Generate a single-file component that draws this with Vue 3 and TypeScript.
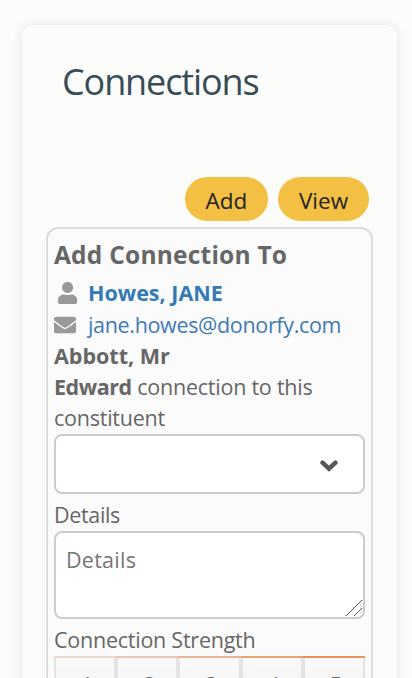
<script setup lang="ts">
import { ref } from 'vue'

interface Strength {
  value: number
  color: string
}

const details = ref('')
const strengths: Strength[] = [
  { value: 1, color: '#ead9d0' },
  { value: 2, color: '#eac8b5' },
  { value: 3, color: '#e8b595' },
  { value: 4, color: '#e5a478' },
  { value: 5, color: '#e4935a' },
]
</script>

<template>
  <main class="page">
    <section class="card">
      <h1 class="title">Connections</h1>
      <div class="actions">
        <button class="pill add" type="button">Add</button>
        <button class="pill view" type="button">View</button>
      </div>
      <div class="panel">
        <h2 class="heading">Add Connection To</h2>
        <div class="row person">
          <span class="icon-slot user">
            <svg viewBox="0 0 448 512" width="19.25" height="22"><path fill="currentColor" d="M224 256c70.7 0 128-57.3 128-128S294.7 0 224 0 96 57.3 96 128s57.3 128 128 128zm89.6 32h-16.7c-22.2 10.2-46.9 16-72.9 16s-50.6-5.8-72.9-16h-16.7C60.2 288 0 348.2 0 422.4V464c0 26.5 21.5 48 48 48h352c26.5 0 48-21.5 48-48v-41.6c0-74.2-60.2-134.4-134.4-134.4z" /></svg>
          </span>
          <a class="name">Howes, JANE</a>
        </div>
        <div class="row">
          <span class="icon-slot">
            <svg viewBox="0 0 512 512" width="22" height="22"><path fill="currentColor" d="M502.3 190.8c3.9-3.1 9.7-.2 9.7 4.7V400c0 26.5-21.5 48-48 48H48c-26.5 0-48-21.5-48-48V195.6c0-5 5.7-7.8 9.7-4.7 22.4 17.4 52.1 39.5 154.1 113.6 21.1 15.4 56.7 47.8 92.2 47.6 35.7.3 72-32.8 92.3-47.6 102-74.1 131.6-96.3 154-113.7zM256 320c23.2.4 56.6-29.2 73.4-41.4 132.7-96.3 142.8-104.7 173.4-128.7 5.8-4.5 9.2-11.5 9.2-18.9v-19c0-26.5-21.5-48-48-48H48c-26.5 0-48 21.5-48 48v19c0 7.4 3.4 14.3 9.2 18.9 30.6 23.9 40.7 32.4 173.4 128.7 16.8 12.2 50.2 41.8 73.4 41.4z" /></svg>
          </span>
          <a class="email">jane.howes@donorfy.com</a>
        </div>
        <p class="sentence">
          <b>Abbott, Mr</b><br />
          <b class="edward">Edward</b> <span class="rest">connection to this</span><br />
          <span class="rest">constituent</span>
        </p>
        <div class="select" role="combobox">
          <svg viewBox="0 0 18 12" width="18" height="12"><path fill="none" stroke="#54575a" stroke-width="4.4" stroke-linecap="round" d="M2.500 2.700 9 8.700 15.500 2.700" /></svg>
        </div>
        <label class="label">Details</label>
        <div class="area">
          <textarea v-model="details" placeholder="Details"></textarea>
          <svg class="grip" viewBox="0 0 16 16" width="16" height="16"><path d="M0 16 16 0M8 16 16 8" stroke="#555" stroke-width="1" /></svg>
        </div>
        <label class="label strength-label">Connection Strength</label>
        <div class="scale">
          <div v-for="s in strengths" :key="s.value" class="cell" :style="{ borderTopColor: s.color }">
            <span class="digit">{{ s.value }}</span>
          </div>
        </div>
      </div>
    </section>
  </main>
</template>

<style>
body {
  overflow: hidden;
  background: #fcfcfa;
}
</style>

<style scoped>
.page {
  box-sizing: border-box;
  height: 678px;
  overflow: hidden;
  padding: 25px 15px 0 22px;
  background: #fcfcfa;
  font-family: 'Open Sans', 'Noto Sans', sans-serif;
  font-size: 21.5px;
  line-height: 31px;
  color: #666;
}
.card {
  box-sizing: border-box;
  height: 760px;
  padding: 30px 24px 0;
  border-radius: 12px;
  background: #fcfcfa;
  box-shadow: 0 0 12px rgba(0, 0, 0, 0.1);
}
.title {
  margin: 0 0 0 16px;
  height: 122px;
  font-size: 36px;
  line-height: 53px;
  font-weight: 400;
  letter-spacing: -1.1px;
  color: #364c58;
}
.actions {
  display: flex;
  justify-content: flex-end;
  gap: 10px;
  padding-right: 4px;
}
.pill {
  box-sizing: border-box;
  height: 44px;
  padding: 3px 0 0;
  border: 0;
  border-radius: 22px;
  background: #f3c044;
  color: #222;
  font: inherit;
  font-size: 22.5px;
  line-height: 41px;
}
.add {
  width: 83px;
}
.view {
  width: 91px;
}
.panel {
  box-sizing: border-box;
  height: 520px;
  margin-top: 6px;
  padding: 8px 6px 0;
  border: 2px solid #dcdcdc;
  border-radius: 12px;
  background: #fbfbfb;
}
.heading {
  margin: 0;
  height: 40px;
  font-size: 24.5px;
  line-height: 36px;
  font-weight: 700;
  letter-spacing: 0.22px;
}
.row {
  display: flex;
  height: 31px;
  white-space: nowrap;
  color: #999;
}
.person {
  height: 32px;
}
.icon-slot {
  display: flex;
  flex: none;
  align-items: center;
  width: 34px;
}
.icon-slot.user {
  box-sizing: border-box;
  padding-left: 4px;
}
.name {
  font-weight: 700;
  color: #337ab7;
}
.email {
  letter-spacing: -0.33px;
  color: #3d7ab8;
}
.sentence {
  margin: 0;
  white-space: nowrap;
}
.edward {
  letter-spacing: -0.45px;
}
.rest {
  letter-spacing: -0.24px;
}
.select {
  box-sizing: border-box;
  display: flex;
  align-items: center;
  justify-content: flex-end;
  height: 60px;
  margin-top: 1px;
  padding: 3px 25px 0 0;
  border: 2px solid #ccc;
  border-radius: 8px;
  background: #fff;
}
.label {
  display: block;
  height: 32px;
  padding-top: 5px;
  letter-spacing: -0.35px;
}
.strength-label {
  letter-spacing: -0.24px;
}
.area {
  position: relative;
  height: 88px;
}
textarea {
  display: block;
  box-sizing: border-box;
  width: 100%;
  height: 88px;
  padding: 11px 10px;
  border: 2px solid #ccc;
  border-radius: 8px;
  background: #fff;
  font: inherit;
  letter-spacing: 0.25px;
  resize: none;
  outline: 0;
}
textarea::placeholder {
  color: #757575;
}
.grip {
  position: absolute;
  right: 3px;
  bottom: 3px;
}
.scale {
  display: flex;
  height: 70px;
}
.cell {
  box-sizing: border-box;
  flex: 1;
  padding-top: 11px;
  border-top: 2px solid;
  text-align: center;
  background:
    linear-gradient(#e3e3e3, #e3e3e3) left / 2px 100% no-repeat,
    linear-gradient(#e3e3e3, #e3e3e3) right / 2px 100% no-repeat,
    linear-gradient(#fafafa, #eee);
}
.digit {
  padding-left: 4px;
}
</style>
